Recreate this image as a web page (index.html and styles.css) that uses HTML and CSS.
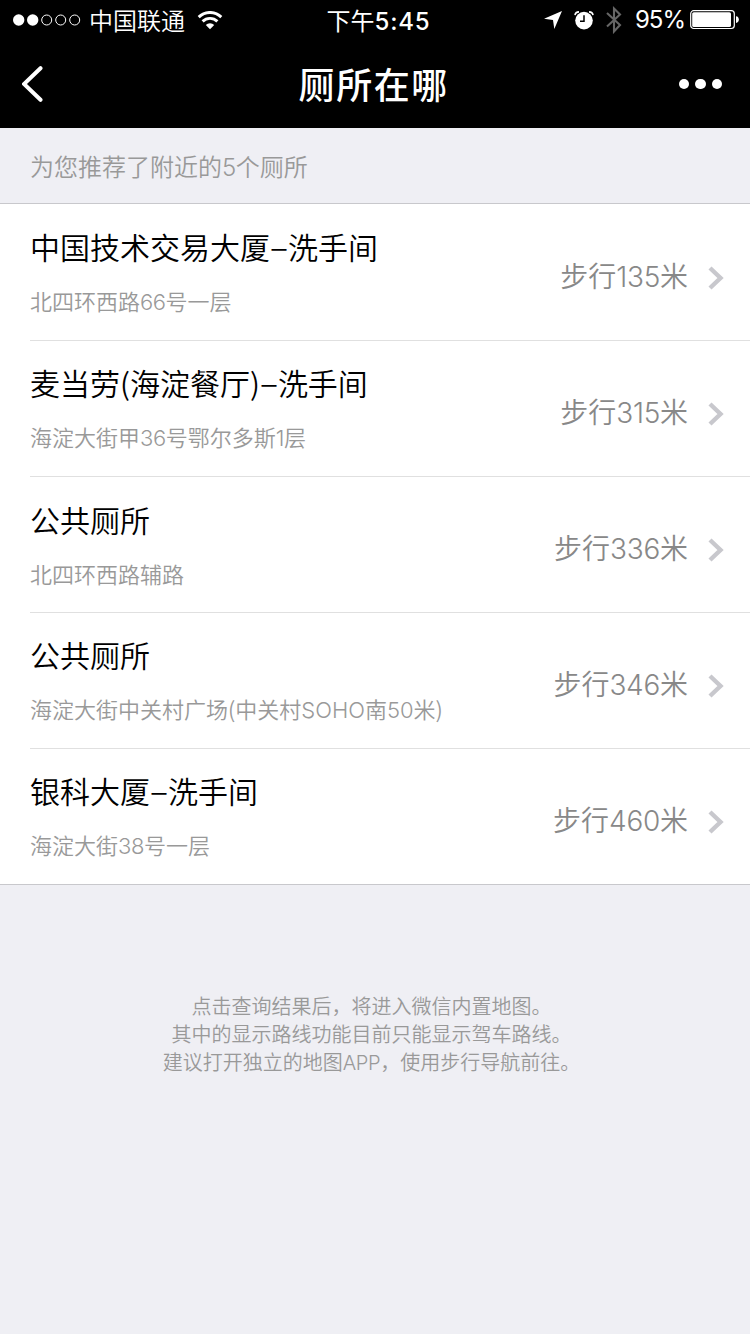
FILE: index.html
```html
<!DOCTYPE html>
<html lang="zh-CN">
<head>
    <meta charset="UTF-8">
    <meta name="viewport" content="width=device-width, initial-scale=1.0">
    <title>厕所在哪</title>
    <link rel="stylesheet" href="styles.css">
</head>
<body>
    <header>
        <div class="status-bar">
            <div class="status-left">
                <svg class="signal" width="68" height="12" viewBox="0 0 68 12">
                    <circle cx="5.7" cy="6" r="5.7" fill="#fff"/>
                    <circle cx="19.7" cy="6" r="5.7" fill="#fff"/>
                    <circle cx="33.7" cy="6" r="5" fill="none" stroke="#fff"/>
                    <circle cx="47.7" cy="6" r="5" fill="none" stroke="#fff"/>
                    <circle cx="61.7" cy="6" r="5" fill="none" stroke="#fff"/>
                </svg>
                <span class="carrier">中国联通</span>
                <svg class="wifi" width="26" height="19" viewBox="0 0 26 19" fill="none" stroke="#fff" stroke-width="2.9">
                    <path d="M1.7 6.1a16 16 0 0 1 22.6 0"/>
                    <path d="M5.6 10.4a10.6 10.6 0 0 1 14.8 0"/>
                    <path d="M8.8 14a6 6 0 0 1 8.4 0L13 18.2z" fill="#fff" stroke="none"/>
                </svg>
            </div>
            <div class="time">下午<span class="clock">5:45</span></div>
            <div class="status-right">
                <svg class="location" width="18" height="18" viewBox="0 0 18 18">
                    <path d="M18 0L10.3 18L9 9L0 7.7z" fill="#fff"/>
                </svg>
                <svg class="alarm" width="20" height="19" viewBox="0 0 20 19">
                    <circle cx="10" cy="9.6" r="8.8" fill="#fff"/>
                    <path d="M10 4.2V10.2H6" fill="none" stroke="#000" stroke-width="1.5"/>
                    <path d="M1 4.2Q1.4 1 5 .9M19 4.2Q18.6 1 15 .9" fill="none" stroke="#fff" stroke-width="1.6"/>
                </svg>
                <svg class="bluetooth" width="16" height="28" viewBox="0 0 16 28">
                    <path d="M1 7L14 19L8 25.5V2.5L14 8.5L1 20.5" fill="none" stroke="#666" stroke-width="2.1"/>
                </svg>
                <span class="percent">95%</span>
                <svg class="battery" width="49" height="20" viewBox="0 0 49 20">
                    <rect x=".7" y=".7" width="43.6" height="17.8" rx="3" fill="none" stroke="#fff" stroke-width="1.2"/>
                    <rect x="2.2" y="2.2" width="38.8" height="14.8" rx="1.6" fill="#fff"/>
                    <path d="M46 6.2c3.8.2 3.8 6.6 0 6.8z" fill="#fff"/>
                </svg>
            </div>
        </div>
        <nav>
            <a class="back" href="#">
                <svg width="22" height="36" viewBox="0 0 22 36">
                    <path d="M18.5 2.2L2 18L18.5 33.8" fill="none" stroke="#fff" stroke-width="4" stroke-linecap="round"/>
                </svg>
            </a>
            <h1>厕所在哪</h1>
            <a class="more" href="#"><i></i><i></i><i></i></a>
        </nav>
    </header>

    <h2>为您推荐了附近的<span class="num">5</span>个厕所</h2>

    <ul class="list">
        <li>
            <div class="info">
                <h3>中国技术交易大厦<span class="dash">–</span>洗手间</h3>
                <p>北四环西路<span class="num">66</span>号一层</p>
            </div>
            <div class="distance">步行<span class="num">135</span>米</div>
            <svg class="arrow" width="16" height="24" viewBox="0 0 16 24"><path d="M2 2L12.5 12L2 22"/></svg>
        </li>
        <li>
            <div class="info">
                <h3>麦当劳(海淀餐厅)<span class="dash">–</span>洗手间</h3>
                <p>海淀大街甲<span class="num">36</span>号鄂尔多斯<span class="num">1</span>层</p>
            </div>
            <div class="distance">步行<span class="num">315</span>米</div>
            <svg class="arrow" width="16" height="24" viewBox="0 0 16 24"><path d="M2 2L12.5 12L2 22"/></svg>
        </li>
        <li>
            <div class="info">
                <h3>公共厕所</h3>
                <p>北四环西路辅路</p>
            </div>
            <div class="distance">步行<span class="num">336</span>米</div>
            <svg class="arrow" width="16" height="24" viewBox="0 0 16 24"><path d="M2 2L12.5 12L2 22"/></svg>
        </li>
        <li>
            <div class="info">
                <h3>公共厕所</h3>
                <p>海淀大街中关村广场(中关村<span class="num wide">SOHO</span>南<span class="num wide">50</span>米)</p>
            </div>
            <div class="distance">步行<span class="num">346</span>米</div>
            <svg class="arrow" width="16" height="24" viewBox="0 0 16 24"><path d="M2 2L12.5 12L2 22"/></svg>
        </li>
        <li>
            <div class="info">
                <h3>银科大厦<span class="dash">–</span>洗手间</h3>
                <p>海淀大街<span class="num">38</span>号一层</p>
            </div>
            <div class="distance">步行<span class="num">460</span>米</div>
            <svg class="arrow" width="16" height="24" viewBox="0 0 16 24"><path d="M2 2L12.5 12L2 22"/></svg>
        </li>
    </ul>

    <footer>
        <p>点击查询结果后，将进入微信内置地图。</p>
        <p>其中的显示路线功能目前只能显示驾车路线。</p>
        <p>建议打开独立的地图<span class="num">APP</span>，使用步行导航前往。</p>
    </footer>
</body>
</html>
```
FILE: styles.css
```css
* {
    box-sizing: border-box;
}
body {
    margin: 0;
    min-height: 1334px;
    font-family: "Noto Sans CJK SC", sans-serif;
    font-weight: 350;
    color: #000;
    background-color: #efeff4;
}
h1, h2, h3, p, ul {
    margin: 0;
    padding: 0;
    font-weight: inherit;
}
svg {
    display: block;
    flex: none;
}
.num {
    font-family: Inter, "Liberation Sans", sans-serif;
    font-weight: 300;
    letter-spacing: -0.02em;
}
.wide {
    letter-spacing: 0;
}

/* Header */
header {
    height: 128px;
    color: #fff;
    background-color: #000;
}
.status-bar {
    display: grid;
    grid-template-columns: 1fr auto 1fr;
    align-items: center;
    height: 40px;
    padding: 0 11px 0 13px;
    font-size: 24px;
    line-height: 38px;
}
.status-left, .status-right {
    display: flex;
    align-items: center;
    height: 40px;
}
.status-right {
    justify-content: flex-end;
}
.carrier {
    margin: 0 12px 1px 8px;
}
.time {
    margin-bottom: 1px;
    padding-left: 5px;
    font-weight: 400;
}
.clock {
    font-family: Inter, sans-serif;
    font-weight: 500;
    letter-spacing: 0.8px;
}
.alarm {
    margin-left: 12px;
}
.bluetooth {
    margin: 0 13px 0 12px;
}
.percent {
    margin-right: 5px;
    font-family: Inter, sans-serif;
    font-size: 24px;
    font-weight: 400;
    letter-spacing: -1px;
}
.percent, .clock {
    line-height: 1;
}
nav {
    display: flex;
    justify-content: space-between;
    align-items: center;
    height: 88px;
    padding: 0 28px 0 22px;
}
.back {
    width: 44px;
}
nav h1 {
    padding-bottom: 2px;
    padding-left: 3px;
    font-size: 36px;
    font-weight: 500;
    letter-spacing: 1.6px;
}
.more {
    display: flex;
    gap: 6px;
}
.more i {
    width: 10.5px;
    height: 10.5px;
    border-radius: 50%;
    background-color: #fff;
}

/* Results */
h2 {
    height: 75px;
    padding-left: 30px;
    font-size: 24px;
    line-height: 75px;
    color: #999;
}
.list {
    list-style: none;
    background-color: #fff;
    border-top: 1px solid #c8c8cc;
    border-bottom: 1px solid #c8c8cc;
}
.list li {
    display: flex;
    align-items: center;
    height: 136px;
    margin-left: 30px;
    padding-right: 26px;
    border-top: 1px solid #e0e0e0;
}
.list li:first-child {
    border-top-color: transparent;
}
.info {
    flex: 1;
    padding-bottom: 4px;
    white-space: nowrap;
}
.info h3 {
    font-size: 30px;
    line-height: 42px;
}
.dash {
    display: inline-block;
    width: 18px;
    font-family: Inter, sans-serif;
    font-weight: 300;
    line-height: 1;
    text-align: center;
}
.info p {
    margin-top: 18px;
    font-size: 22px;
    line-height: 30px;
    color: #999;
}
.distance {
    padding-top: 4px;
    margin-right: 20px;
    font-size: 28px;
    color: #888;
}
.distance .num {
    letter-spacing: -0.01em;
}
.arrow {
    margin-top: 10px;
    fill: none;
    stroke: #c8c8cd;
    stroke-width: 4.4;
}

footer {
    padding-top: 107px;
    padding-right: 7px;
    text-align: center;
    font-size: 20px;
    line-height: 28px;
    color: #999;
}
```
